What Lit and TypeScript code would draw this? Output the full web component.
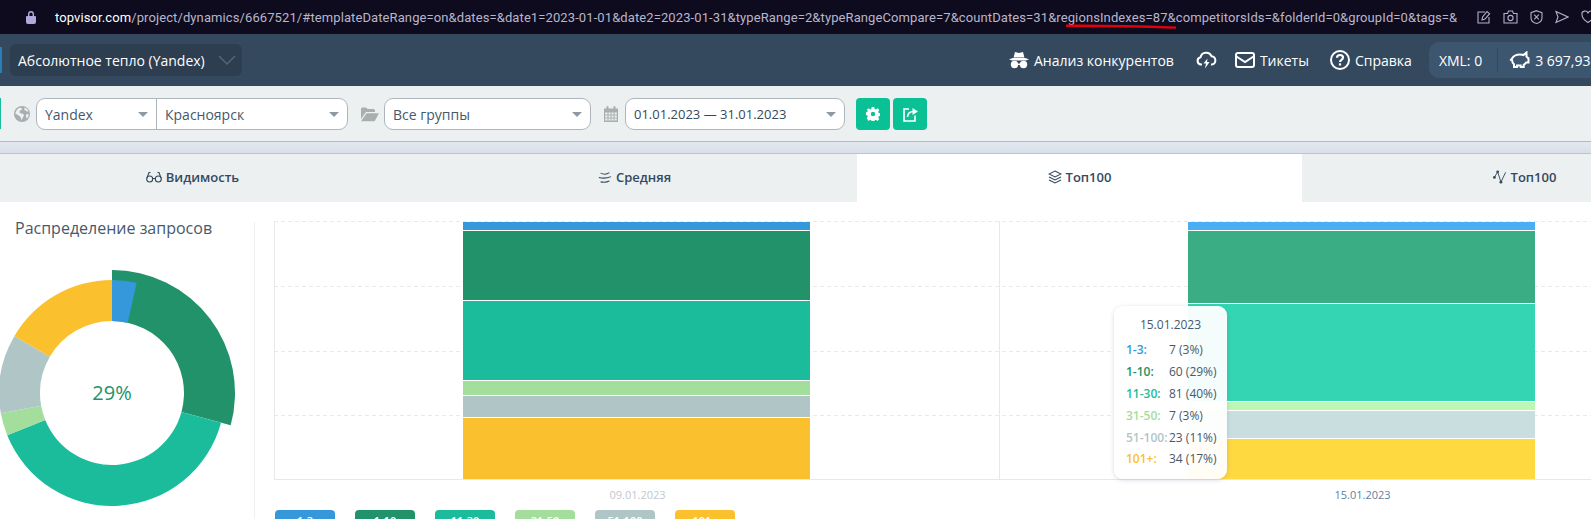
import { LitElement, html, css, svg } from 'lit';
import { customElement } from 'lit/decorators.js';

const SERIES = [
  { label: '1-3', color: '#3498db', hover: '#4aaef5' },
  { label: '1-10', color: '#219269', hover: '#3aad85' },
  { label: '11-30', color: '#1abc9c', hover: '#34d5b3' },
  { label: '31-50', color: '#a3de9d', hover: '#bcf7b6' },
  { label: '51-100', color: '#b0c6c6', hover: '#c9dfdf' },
  { label: '101+', color: '#fbc02d', hover: '#ffd940' },
];

const BAR_HEIGHTS = [
  { x: 189, heights: [8, 69, 79, 14, 21, 61], hover: false },
  { x: 914, heights: [8, 72, 97, 8, 27, 40], hover: true },
];

const TIP_VALUES = ['7 (3%)', '60 (29%)', '81 (40%)', '7 (3%)', '23 (11%)', '34 (17%)'];

// degrees are measured clockwise from the top of the donut
function arc(from: number, to: number, r0: number, r1: number, cx = 112, cy = 133) {
  const pt = (a: number, r: number) => {
    const t = (a * Math.PI) / 180;
    return `${(cx + r * Math.sin(t)).toFixed(2)} ${(cy - r * Math.cos(t)).toFixed(2)}`;
  };
  const large = to - from > 180 ? 1 : 0;
  return `M${pt(from, r1)}A${r1} ${r1} 0 ${large} 1 ${pt(to, r1)}L${pt(to, r0)}A${r0} ${r0} 0 ${large} 0 ${pt(from, r0)}Z`;
}

const icons = {
  lock: html`<svg width="12" height="14" viewBox="0 0 12 14"><path fill="#b3a8dc" d="M3 6V4a3 3 0 0 1 6 0v2h1a1 1 0 0 1 1 1v5a2 2 0 0 1-2 2H3a2 2 0 0 1-2-2V7a1 1 0 0 1 1-1zm1.4 0h3.2V4a1.6 1.6 0 0 0-3.2 0z"/></svg>`,
  edit: html`<svg width="14" height="14" viewBox="0 0 14 14" fill="none" stroke="#b5b0c9" stroke-width="1.1"><path d="M8 2H1v11h11V7"/><path d="M5 10l.6-3L10 1.5l2.6 2.2L8 9z"/></svg>`,
  camera: html`<svg width="15" height="14" viewBox="0 0 15 14" fill="none" stroke="#b5b0c9" stroke-width="1.1"><path d="M1 3.5h3.5L5.5 1h4l1 2.5H14V13H1z"/><circle cx="7.5" cy="8" r="2.6"/></svg>`,
  shield: html`<svg width="13" height="14" viewBox="0 0 13 14" fill="none" stroke="#b5b0c9" stroke-width="1.1"><path d="M6.500.7l5.500 2v5c0 3-2.500 5-5.500 5.800C3.500 12.700 1 10.700 1 7.700v-5z"/><path d="M4.200 4.700l4.600 4.600M8.800 4.700L4.200 9.300"/></svg>`,
  send: html`<svg width="14" height="14" viewBox="0 0 14 14" fill="none" stroke="#b5b0c9" stroke-width="1.1"><path d="M1 1.500L13 7 1 12.500 3 7z"/></svg>`,
  heart: html`<svg width="14" height="14" viewBox="0 0 14 14" fill="none" stroke="#b5b0c9" stroke-width="1.1"><path d="M7 12.500S1 8.700 1 4.700A3 3 0 0 1 7 3.500a3 3 0 0 1 6 1.200c0 4-6 7.800-6 7.800z"/></svg>`,
  secret: html`<svg width="20" height="18" viewBox="0 0 20 18" fill="#fff"><path d="M6 1l4 1 4-1 1.400 5.500H4.600zM0 8.200l4-1.200h12l4 1.200-3 1.300H3z"/><circle cx="5.500" cy="13.500" r="3.700"/><circle cx="14.500" cy="13.500" r="3.700"/><path d="M8.500 12.500h3v1.500h-3z"/></svg>`,
  cloud: html`<svg width="21" height="18" viewBox="0 0 21 18" fill="none" stroke="#fff" stroke-width="2"><path d="M6 13.500H5A3.700 3.700 0 0 1 4.500 6.200 5.800 5.800 0 0 1 15.500 5.200 4.200 4.200 0 0 1 16 13.500h-1"/><path fill="#fff" stroke="none" d="M11.500 7.500L7.500 12.500h2.500l-1 5 4.500-6.500h-2.500z"/></svg>`,
  mail: html`<svg width="20" height="16" viewBox="0 0 20 16" fill="none" stroke="#fff" stroke-width="2"><rect x="1" y="1" width="18" height="14" rx="2"/><path d="M1.500 4.500L10 10l8.500-5.500"/></svg>`,
  help: html`<svg width="20" height="20" viewBox="0 0 20 20" fill="none" stroke="#fff" stroke-width="2"><circle cx="10" cy="10" r="9"/><path stroke-width="2.200" d="M7 7.700C7 5.800 8.500 5 10 5s3 1 3 2.600c0 2.300-3 2.300-3 4.400"/><path stroke-width="2.200" d="M10 13.300v2.200"/></svg>`,
  piggy: html`<svg width="21" height="18" viewBox="0 0 21 18" fill="none" stroke="#fff" stroke-width="2"><path d="M1 8.500c1 .5 1.500 0 2-1C5 4 8 3.500 11 3.500c1.500 0 2.500 0 3.500.5l3-2.500v4l2 2v4h-2.300c-.7 1-1.500 1.700-2.500 2.300V16h-3v-1.500H8V16H5v-2.800C3.500 12 3 10.500 3 8.500"/></svg>`,
  globe: html`<svg width="16" height="16" viewBox="0 0 16 16"><circle cx="8" cy="8" r="8" fill="#a9aeb0"/><path fill="#ecf0f1" d="M3 3.500l2.500-1.800 2.500.4-.4 1.800-1.700.5L5.500 6.500 7 7.500l2 .3 1 1.500-1.500 3-1 2-1-3.300L4 9 1.200 7.500zM10.500 1.500l2.500 1.300 1.600 2.500-1.600.4-1-1.200-1.700-.5zM12 8.500l2.800-.5-.6 3-1.500 1.600-.7-2z"/></svg>`,
  folder: html`<svg width="18" height="15" viewBox="0 0 18 15" fill="#a9aeb0"><path d="M0 12V2a1.500 1.500 0 0 1 1.500-1.500h3.500l1.500 1.500h6A1.500 1.500 0 0 1 14 3.500V5H5L0 12z"/><path d="M5.600 6.200H18l-4.400 8H0z"/></svg>`,
  calendar: html`<svg width="14" height="16" viewBox="0 0 14 16" fill="#a9aeb0"><rect x="2.500" y="0" width="2" height="4" rx="1"/><rect x="9.500" y="0" width="2" height="4" rx="1"/><path fill-rule="evenodd" d="M0 2.500h14V16H0zM1.200 6.500v2h2.300v-2zm3.300 0v2h2v-2zm3 0v2h2v-2zm3 0v2h2.300v-2zm-9.300 3v2h2.300v-2zm3.300 0v2h2v-2zm3 0v2h2v-2zm3 0v2h2.300v-2zm-9.300 3v2h2.300v-2zm3.300 0v2h2v-2zm3 0v2h2v-2zm3 0v2h2.300v-2z"/></svg>`,
  gear: html`<svg width="14" height="14" viewBox="0 0 14 14"><path fill="#fff" fill-rule="evenodd" d="M5.700 0h2.600l.4 1.900 1.100.5L11.500 1.300l1.800 1.800-1.100 1.700.5 1.100 1.900.4v2.600l-1.900.4-.5 1.100 1.100 1.700-1.800 1.800-1.700-1.100-1.100.5-.4 1.900H5.700l-.4-1.900-1.100-.5-1.700 1.100L.7 11.100l1.100-1.700-.5-1.100L-.6 7.900V5.300l1.900-.4.5-1.100L.7 3.100l1.800-1.800 1.700 1.100 1.100-.5zM7 4.800A2.200 2.200 0 1 0 7 9.200 2.200 2.200 0 0 0 7 4.800z"/></svg>`,
  share: html`<svg width="15" height="15" viewBox="0 0 15 15" fill="none" stroke="#fff" stroke-width="1.600"><path d="M6 2H1v12h11V8.500"/><path d="M4.500 10c.3-3.500 2.500-5.500 6-5.500"/><path fill="#fff" stroke="none" d="M9.500 1L15 4.500 9.500 8z"/></svg>`,
  glasses: html`<svg width="16" height="12" viewBox="0 0 16 12" fill="none" stroke="#34495e" stroke-width="1.100"><circle cx="3.700" cy="8" r="3"/><circle cx="12.300" cy="8" r="3"/><path d="M6.700 7.500h2.600M1 7l2-5.500h1.500M15 7l-2-5.500h-1.500"/></svg>`,
  waves: html`<svg width="14" height="13" viewBox="0 0 16 13" fill="none" stroke="#34495e" stroke-width="1.200"><path d="M3 1.500c3 1.500 7 1.500 10-.5M1 6.500c4 1 9 1 14-1M3 11.500c3 .5 7 .5 10-1"/></svg>`,
  layers: html`<svg width="14" height="14" viewBox="0 0 14 14" fill="none" stroke="#34495e" stroke-width="1.100"><path d="M7 1l6 3-6 3-6-3z"/><path d="M1 7l6 3 6-3M1 10l6 3 6-3"/></svg>`,
  nodes: html`<svg width="14" height="14" viewBox="0 0 15 14" fill="#34495e"><path fill="none" stroke="#34495e" d="M1.500 7.500L5 1.500l3.500 11L13.500 2"/><circle cx="1.500" cy="7.500" r="1.500"/><circle cx="5" cy="1.500" r="1.500"/><circle cx="8.500" cy="12.500" r="1.500"/></svg>`,
};

@customElement('app-root')
export class AppRoot extends LitElement {
  static styles = css`
    :host {
      display: block;
      width: 1591px;
      height: 519px;
      overflow: hidden;
      position: relative;
      background: #fff;
      font-family: 'Open Sans', 'Noto Sans', sans-serif;
      color: #34495e;
    }

    .browser {
      height: 34px;
      background: #0e0b1e;
      display: flex;
      align-items: center;
      padding-left: 25px;
      overflow: hidden;
      font-family: Roboto, 'Noto Sans', sans-serif;
    }
    .lock { display: flex; margin-right: 18px; }
    .url {
      width: 1407px;
      flex: none;
      overflow: hidden;
      white-space: nowrap;
      font-size: 13px;
      letter-spacing: 0.1px;
      color: #b9b5cb;
    }
    .url b { font-weight: 400; color: #fff; }
    .browser-icons { display: flex; align-items: center; gap: 12px; margin-left: 15px; flex: none; }
    .browser-icons svg { display: block; }
    .underline { position: absolute; left: 1066px; top: 24px; }

    .header {
      height: 52px;
      background: #34495e;
      display: flex;
      align-items: center;
      color: #fff;
      font-size: 14px;
      white-space: nowrap;
    }
    .tick { width: 2px; height: 26px; background: #2980b9; margin-right: 8px; flex: none; }
    .project {
      width: 232px;
      height: 32px;
      box-sizing: border-box;
      padding: 0 6px 0 8px;
      border-radius: 6px;
      background: #2c3e50;
      display: flex;
      align-items: center;
      justify-content: space-between;
      flex: none;
    }
    .nav { margin-left: 767px; display: flex; align-items: center; flex: none; }
    .nav-item { display: flex; align-items: center; gap: 5px; margin-right: 20px; }
    .nav-item svg { display: block; }
    .nav-cloud { margin-left: 2px; margin-right: 18px; }
    .nav-mail { margin-right: 21px; }
    .balance {
      width: 180px;
      height: 36px;
      margin-left: -3px;
      flex: none;
      box-sizing: border-box;
      padding-left: 10px;
      border-radius: 10px 0 0 10px;
      background: #3d5670;
      display: flex;
      align-items: center;
    }
    .balance-sep { width: 1px; height: 24px; background: #34495e; margin: 0 11px 0 15px; }
    .balance svg { margin-right: 5px; display: block; }

    .toolbar {
      height: 56px;
      box-sizing: border-box;
      background: #ecf0f1;
      border-bottom: 1px solid #b4bbc2;
      display: flex;
      align-items: flex-start;
      padding-top: 12px;
    }
    .mark { width: 1px; height: 31px; background: #1abc9c; margin-right: 13px; }
    .tool-icon { display: flex; height: 32px; align-items: center; }
    .select-group, .select {
      height: 32px;
      box-sizing: border-box;
      border: 1px solid #aeb6bd;
      border-radius: 9px;
      background: #fff;
      display: flex;
      font-size: 14px;
      line-height: 30px;
      color: #46596b;
      flex: none;
    }
    .select-group { width: 312px; margin-left: 6px; }
    .cell { display: flex; justify-content: space-between; align-items: center; box-sizing: border-box; }
    .cell span, .select-groups span { margin-top: 2px; }
    .cell-engine { width: 120px; padding: 0 8px 0 8px; border-right: 1px solid #aeb6bd; }
    .cell-region { flex: 1; padding: 0 8px 0 8px; }
    .arrow {
      width: 0;
      height: 0;
      border-left: 5px solid transparent;
      border-right: 5px solid transparent;
      border-top: 5px solid #8d99a3;
    }
    .select { justify-content: space-between; align-items: center; padding: 0 8px; }
    .select-groups { width: 207px; margin-left: 5px; }
    .select-date { width: 220px; margin-left: 7px; color: #34495e; font-size: 13px; }
    .folder { margin-left: 13px; }
    .cal { margin-left: 13px; }
    .btn {
      width: 34px;
      height: 32px;
      border-radius: 4px;
      background: #0ac095;
      display: flex;
      align-items: center;
      justify-content: center;
      margin-left: 3px;
    }
    .btn-first { margin-left: 11px; }

    .strip {
      height: 12px;
      box-sizing: border-box;
      background: linear-gradient(#e3e8f0, #d9dfe9);
      border-bottom: 1px solid #bcc3cf;
    }

    .tabs { height: 48px; display: flex; margin-left: -33px; }
    .tab {
      width: 445px;
      flex: none;
      box-sizing: border-box;
      padding-bottom: 2px;
      background: #ecf0f1;
      display: flex;
      align-items: center;
      justify-content: center;
      gap: 4px;
      font-size: 13px;
      font-weight: 600;
    }
    .tab svg { display: block; }
    .tab:first-child { padding-left: 6px; }
    .tab.active { background: #fff; }

    .content { display: flex; padding-top: 19px; }
    .side {
      width: 255px;
      height: 300px;
      box-sizing: border-box;
      margin-top: 1px;
      border-right: 1px solid #ecf0f1;
      flex: none;
    }
    .side h3 {
      margin: -1px 0 0;
      padding-left: 15px;
      font-size: 16px;
      line-height: 14px;
      font-weight: 400;
      color: #46596b;
    }
    .donut { display: block; margin-top: 25px; overflow: visible; }
    .donut text { font: 500 20px 'Open Sans', sans-serif; fill: #219269; text-anchor: middle; }

    .chart { margin-left: 19px; position: relative; flex: none; }
    .plot { display: block; }
    .axis { display: flex; height: 28px; margin-left: 1px; }
    .axis div {
      width: 725px;
      flex: none;
      text-align: center;
      font-size: 11px;
      line-height: 29px;
      color: #c3c8cf;
    }
    .axis div.on { color: #5f7fa0; }
    .legend { display: flex; gap: 20px; margin: 2px 0 0 1px; }
    .legend div {
      width: 60px;
      height: 30px;
      border-radius: 4px;
      color: #fff;
      font-size: 11px;
      font-weight: 600;
      text-align: center;
      line-height: 22px;
    }

    .tip {
      position: absolute;
      left: 840px;
      top: 85px;
      width: 113px;
      height: 173px;
      box-sizing: border-box;
      padding: 9px 0 0 12px;
      border-radius: 9px;
      background: rgba(255, 255, 255, 0.95);
      box-shadow: 0 1px 4px rgba(90, 105, 130, 0.25);
      font-size: 12px;
      color: #46596b;
    }
    .tip-date { width: 89px; text-align: center; line-height: 20px; margin-bottom: 4px; }
    .tip-row { display: flex; height: 21.8px; align-items: center; white-space: nowrap; }
    .tip-row b { width: 43px; flex: none; font-weight: 600; }
  `;

  private renderBars() {
    return BAR_HEIGHTS.map((bar) => {
      let y = 1;
      return bar.heights.map((h, i) => {
        const s = SERIES[i];
        const r = svg`<rect x=${bar.x} y=${y} width="347" height=${h} fill=${bar.hover ? s.hover : s.color}></rect>`;
        y += h + 1;
        return r;
      });
    });
  }

  private renderPlot() {
    return html`<svg class="plot" width="1317" height="259" viewBox="0 0 1317 259">
      ${[0.5, 65.5, 130.5, 194.5].map(
        (y) => svg`<line x1="0" x2="1317" y1=${y} y2=${y} stroke="#eaeaea" stroke-dasharray="4 3"></line>`
      )}
      <line x1="0.5" x2="0.5" y1="0" y2="259" stroke="#e8e8e8"></line>
      <line x1="725.5" x2="725.5" y1="0" y2="259" stroke="#e8e8e8"></line>
      ${this.renderBars()}
      <line x1="0" x2="1317" y1="258.5" y2="258.5" stroke="#e8e8e8"></line>
    </svg>`;
  }

  private renderDonut() {
    return html`<svg class="donut" width="254" height="270" viewBox="0 0 254 270">
      <path d=${arc(0, 105.2, 72, 123)} fill="#219269"></path>
      <path d=${arc(0, 12.6, 72, 113)} fill="#3498db"></path>
      <path d=${arc(105.2, 248, 72, 113)} fill="#1abc9c"></path>
      <path d=${arc(248, 259.7, 72, 113)} fill="#a3de9d"></path>
      <path d=${arc(259.7, 300.3, 72, 113)} fill="#b0c6c6"></path>
      <path d=${arc(300.3, 360, 72, 113)} fill="#fbc02d"></path>
      <text x="112" y="140">29%</text>
    </svg>`;
  }

  render() {
    return html`
      <div class="browser">
        <span class="lock">${icons.lock}</span>
        <div class="url"><b>topvisor.com</b>/project/dynamics/6667521/#templateDateRange=on&amp;dates=&amp;date1=2023-01-01&amp;date2=2023-01-31&amp;typeRange=2&amp;typeRangeCompare=7&amp;countDates=31&amp;regionsIndexes=87&amp;competitorsIds=&amp;folderId=0&amp;groupId=0&amp;tags=&amp;</div>
        <div class="browser-icons">
          ${icons.edit}${icons.camera}${icons.shield}${icons.send}${icons.heart}
        </div>
      </div>
      <svg class="underline" width="112" height="6" viewBox="0 0 112 6"><path d="M0 1.800C30 1.600 70 2.200 110 3.600" fill="none" stroke="#e3000b" stroke-width="2.400"></path></svg>

      <div class="header">
        <span class="tick"></span>
        <div class="project">
          <span>Абсолютное тепло (Yandex)</span>
          <svg width="18" height="10" viewBox="0 0 18 10" fill="none" stroke="#4f6579" stroke-width="1.500"><path d="M1 1l8 8 8-8"></path></svg>
        </div>
        <div class="nav">
          <div class="nav-item">${icons.secret}<span>Анализ конкурентов</span></div>
          <div class="nav-item nav-cloud">${icons.cloud}</div>
          <div class="nav-item nav-mail">${icons.mail}<span>Тикеты</span></div>
          <div class="nav-item">${icons.help}<span>Справка</span></div>
          <div class="balance">
            <span>XML: 0</span>
            <span class="balance-sep"></span>
            ${icons.piggy}
            <span>3 697,93</span>
          </div>
        </div>
      </div>

      <div class="toolbar">
        <span class="mark"></span>
        <span class="tool-icon">${icons.globe}</span>
        <div class="select-group">
          <div class="cell cell-engine"><span>Yandex</span><i class="arrow"></i></div>
          <div class="cell cell-region"><span>Красноярск</span><i class="arrow"></i></div>
        </div>
        <span class="tool-icon folder">${icons.folder}</span>
        <div class="select select-groups"><span>Все группы</span><i class="arrow"></i></div>
        <span class="tool-icon cal">${icons.calendar}</span>
        <div class="select select-date"><span>01.01.2023 — 31.01.2023</span><i class="arrow"></i></div>
        <div class="btn btn-first">${icons.gear}</div>
        <div class="btn">${icons.share}</div>
      </div>
      <div class="strip"></div>

      <div class="tabs">
        <div class="tab">${icons.glasses}<span>Видимость</span></div>
        <div class="tab">${icons.waves}<span>Средняя</span></div>
        <div class="tab active">${icons.layers}<span>Топ100</span></div>
        <div class="tab">${icons.nodes}<span>Топ100</span></div>
      </div>

      <div class="content">
        <div class="side">
          <h3>Распределение запросов</h3>
          ${this.renderDonut()}
        </div>
        <div class="chart">
          ${this.renderPlot()}
          <div class="axis">
            <div>09.01.2023</div>
            <div class="on">15.01.2023</div>
          </div>
          <div class="legend">
            ${SERIES.map((s) => html`<div style="background:${s.color}">${s.label}</div>`)}
          </div>
          <div class="tip">
            <div class="tip-date">15.01.2023</div>
            ${SERIES.map(
              (s, i) => html`<div class="tip-row"><b style="color:${s.color}">${s.label}:</b><span>${TIP_VALUES[i]}</span></div>`
            )}
          </div>
        </div>
      </div>
    `;
  }
}
